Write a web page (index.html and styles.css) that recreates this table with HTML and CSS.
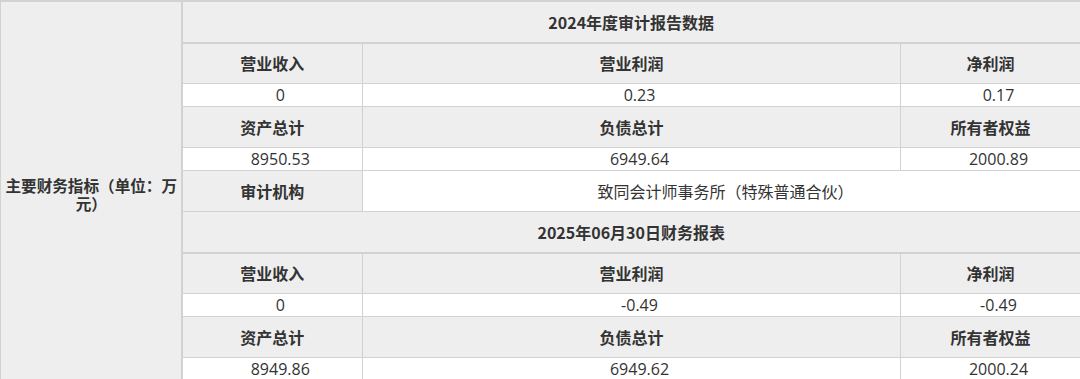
FILE: index.html
```html
<!DOCTYPE html>
<html lang="zh-CN">
<head>
<meta charset="utf-8">
<title>主要财务指标</title>
<link rel="stylesheet" href="styles.css">
</head>
<body>
<table class="fin">
  <colgroup>
    <col class="c-label">
    <col class="c-1">
    <col class="c-2">
    <col class="c-3">
  </colgroup>
  <tbody>
    <tr class="prev">
      <td class="g"></td>
      <td class="w" colspan="2"></td>
      <td class="w"></td>
    </tr>
    <tr class="title">
      <td class="label" rowspan="12">主要财务指标（单位：万元）</td>
      <td class="th title-cell" colspan="3">2024年度审计报告数据</td>
    </tr>
    <tr class="head first">
      <td class="th">营业收入</td>
      <td class="th">营业利润</td>
      <td class="th">净利润</td>
    </tr>
    <tr class="val">
      <td class="td">0</td>
      <td class="td">0.23</td>
      <td class="td">0.17</td>
    </tr>
    <tr class="head">
      <td class="th">资产总计</td>
      <td class="th">负债总计</td>
      <td class="th">所有者权益</td>
    </tr>
    <tr class="val">
      <td class="td">8950.53</td>
      <td class="td">6949.64</td>
      <td class="td">2000.89</td>
    </tr>
    <tr class="audit">
      <td class="th">审计机构</td>
      <td class="td firm" colspan="2">致同会计师事务所（特殊普通合伙）</td>
    </tr>
    <tr class="title">
      <td class="th title-cell" colspan="3">2025年06月30日财务报表</td>
    </tr>
    <tr class="head first">
      <td class="th">营业收入</td>
      <td class="th">营业利润</td>
      <td class="th">净利润</td>
    </tr>
    <tr class="val">
      <td class="td">0</td>
      <td class="td">-0.49</td>
      <td class="td">-0.49</td>
    </tr>
    <tr class="head">
      <td class="th">资产总计</td>
      <td class="th">负债总计</td>
      <td class="th">所有者权益</td>
    </tr>
    <tr class="val">
      <td class="td">8949.86</td>
      <td class="td">6949.62</td>
      <td class="td">2000.24</td>
    </tr>
  </tbody>
</table>
</body>
</html>
```

FILE: styles.css
```css
html, body {
  margin: 0;
  padding: 0;
  background: #ffffff;
}

body {
  font-family: "Open Sans", "Noto Sans CJK SC", sans-serif;
  color: #333333;
  font-size: 16px;
  overflow: hidden;
}

.fin {
  width: 1080px;
  border-collapse: collapse;
  table-layout: fixed;
  margin-top: -19px;
}

.c-label { width: 181px; }
.c-1 { width: 181px; }
.c-2 { width: 538px; }
.c-3 { width: 180px; }

.fin td {
  border: 1px solid #d2d2d2;
  padding: 0;
  text-align: center;
  vertical-align: middle;
  white-space: nowrap;
}

.prev td {
  height: 18px;
  border-bottom: 2px solid #d2d2d2;
}

.prev .g { background: #eeeeee; }
.prev .w { background: #f7f7f7; }

.fin td.label {
  background: #eeeeee;
  font-weight: 700;
  font-size: 15.6px;
  line-height: 18px;
  white-space: normal;
  padding: 6px 1px 0 2px;
  border-left: 1px solid #d2d2d2;
  border-right: 2px solid #d2d2d2;
  font-family: "Noto Sans CJK SC", sans-serif;
}

.th {
  background: #eeeeee;
  font-weight: 700;
  line-height: 40px;
  font-family: "Noto Sans CJK SC", sans-serif;
}

.title .th {
  line-height: 40px;
}

.fin .title td.title-cell {
  border-bottom: 2px solid #d2d2d2;
}

.head.first .th {
  line-height: 39px;
}

.audit .th,
.audit .td {
  line-height: 40px;
}

.td {
  background: #ffffff;
  line-height: 22px;
}

.val .td {
  padding-left: 16px;
}

.fin td.firm {
  font-family: "Noto Sans CJK SC", sans-serif;
  padding-left: 8px;
}
```
